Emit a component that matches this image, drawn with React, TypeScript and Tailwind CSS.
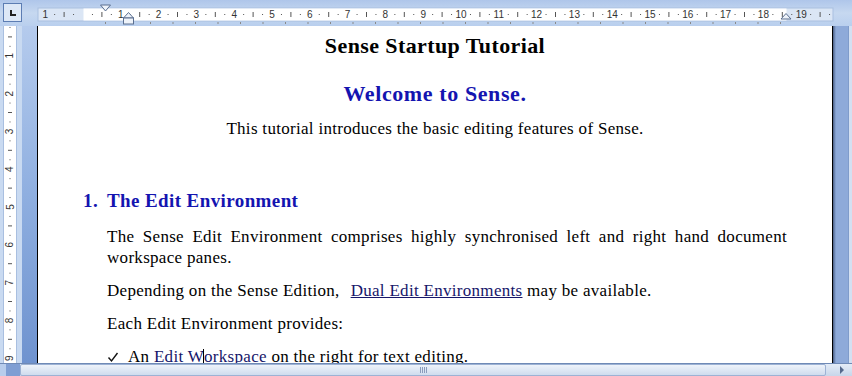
import React from "react";

const CM = 37.8;

function TopRuler() {
  // svg starts at page x = 26
  const zero = 57;
  const marks: React.ReactNode[] = [];
  for (let q = -5; q <= 80; q++) {
    const x = zero + (q * CM) / 4;
    if (x < 14 || x > 804 || q === 0) continue;
    if (q % 4 === 0) {
      marks.push(
        <text key={q} x={x} y={18} textAnchor="middle" fontSize="10" fill="#333" fontFamily="Liberation Sans, sans-serif">
          {Math.abs(q / 4)}
        </text>
      );
    } else if (q % 2 === 0) {
      marks.push(<rect key={q} x={x - 0.5} y={12} width={1} height={5} fill="#555" />);
    } else {
      marks.push(<rect key={q} x={x - 0.5} y={14} width={1} height={1} fill="#555" />);
    }
  }
  const tabs: React.ReactNode[] = [];
  for (let k = 1; k <= 31; k++) {
    const x = zero + k * 22.5;
    tabs.push(<rect key={k} x={x - 0.5} y={22} width={1} height={2} fill="#8a8a8a" />);
  }
  return (
    <svg width="826" height="26" className="block">
      <rect x="12" y="8" width="795" height="13" fill="#dbe6f5" stroke="#a9bfe0" />
      <rect x="57.5" y="8.5" width="703" height="12" fill="#ffffff" />
      {marks}
      {tabs}
      {/* first line indent */}
      <polygon points="74.5,5 84.5,5 79.5,11" fill="#eef3fa" stroke="#5b6f90" />
      {/* hanging indent + left indent box */}
      <polygon points="97.5,18 107.5,18 102.5,12.5" fill="#eef3fa" stroke="#5b6f90" />
      <rect x="97.5" y="18" width="10" height="6" fill="#eef3fa" stroke="#5b6f90" />
      {/* right indent */}
      <polygon points="755,19 765,19 760,13.5" fill="#eef3fa" stroke="#5b6f90" />
    </svg>
  );
}

function SideRuler() {
  const zero = -8;
  const marks: React.ReactNode[] = [];
  for (let q = 1; q <= 38; q++) {
    const y = zero + (q * CM) / 4;
    if (y > 337) continue;
    if (q % 4 === 0) {
      marks.push(
        <text
          key={q}
          x={10}
          y={y + 3.5}
          textAnchor="middle"
          fontSize="10"
          fill="#333"
          fontFamily="Liberation Sans, sans-serif"
          transform={`rotate(-90 10 ${y})`}
        >
          {q / 4}
        </text>
      );
    } else if (q % 2 === 0) {
      marks.push(<rect key={q} x={8} y={y - 0.5} width={4} height={1} fill="#555" />);
    } else {
      marks.push(<rect key={q} x={9.5} y={y - 0.5} width={1} height={1} fill="#555" />);
    }
  }
  return (
    <svg width="22" height="337" className="block">
      <rect x="3.5" y="-2" width="13" height="345" fill="#ffffff" stroke="#a9bfe0" />
      {marks}
    </svg>
  );
}

function Check() {
  return (
    <svg width="12" height="12" viewBox="0 0 12 12" className="inline-block">
      <path d="M1.5 6.5 L4.5 10 L10.5 2" fill="none" stroke="#111" strokeWidth="1.4" />
    </svg>
  );
}

export default function App() {
  return (
    <div className="w-[852px] h-[376px] overflow-hidden flex flex-col bg-[#a9c2e6]">
      <div className="h-[26px] flex bg-gradient-to-b from-[#afc6ea] via-[#c6d8f0] to-[#b9cfee]">
        <div className="w-[26px] pt-[3px] pl-[3px]">
          <div className="w-[19px] h-[19px] border border-[#5c7db3] bg-[#dde8f7] flex items-center justify-center">
            <div className="w-[6px] h-[6px] border-l-2 border-b-2 border-[#222] ml-[1px]" />
          </div>
        </div>
        <TopRuler />
      </div>

      <div className="flex h-[337px]">
        <div className="w-[22px] bg-[#c9daf1]">
          <SideRuler />
        </div>
        <div className="w-[15px] bg-gradient-to-b from-[#b5cbed] via-[#8fafe0] to-[#6f93cf]" />
        <div className="w-[796px] bg-white border-l border-r border-black font-['Liberation_Serif',serif] text-black">
          <div className="px-[45px] pt-[6px]">
            <div className="text-center font-bold text-[22px] leading-[28px] tracking-[0.4px]">Sense Startup Tutorial</div>
            <div className="mt-[20px] text-center font-bold text-[22px] leading-[28px] tracking-[0.6px] text-[#1414b0]">
              Welcome to Sense.
            </div>
            <div className="mt-[10px] text-center text-[17px] leading-[21px] tracking-[0.3px]">
              This tutorial introduces the basic editing features of Sense.
            </div>
            <div className="mt-[49px] flex font-bold text-[19px] leading-[26px] tracking-[0.4px] text-[#1414b0]">
              <span className="w-[24px]">1.</span>
              <span>The Edit Environment</span>
            </div>
            <div className="ml-[24px] text-[17px] leading-[21px] tracking-[0.3px]">
              <div className="mt-[12px]">
                <p className="text-justify [text-align-last:justify]">
                  The Sense Edit Environment comprises highly synchronised left and right hand document
                </p>
                <p>workspace panes.</p>
              </div>
              <p className="mt-[12px]">
                Depending on the Sense Edition,
                <span className="ml-[11px] underline text-[#16166a]">Dual Edit Environments</span> may be available.
              </p>
              <p className="mt-[12px]">Each Edit Environment provides:</p>
              <div className="mt-[12px] flex items-center">
                <span className="w-[21px] flex items-center">
                  <Check />
                </span>
                <span>
                  An <span className="text-[#16166a]">Edit W</span>
                  <span className="inline-block w-0 h-[17px] border-l border-black align-[-4px] -ml-[1px]" />
                  <span className="text-[#16166a]">orkspace</span> on the right for text editing.
                </span>
              </div>
            </div>
          </div>
        </div>
        <div className="w-[19px] flex bg-[#8eaad9]">
          <div className="w-[3px] bg-gradient-to-r from-[#4a5f85] to-[#8eaad9]" />
          <div className="flex-1" />
          <div className="w-[4px] bg-[#d3e0f2] border-l border-[#7f9ccb]" />
        </div>
      </div>

      <div className="h-[13px] flex border-t border-[#6f8ab6] bg-gradient-to-b from-[#e4ecf7] to-[#c7d6ea]">
        <div className="w-[20px] flex">
          <div className="w-[6px] bg-[#b8cdec]" />
          <div className="flex-1 bg-[#7f9ed3]" />
        </div>
        <div className="w-[806px] flex items-center justify-center border border-[#9db2d4] rounded-[2px] bg-gradient-to-b from-[#eef3fa] to-[#cfdcee]">
          <div className="flex gap-[1px]">
            <div className="w-[1px] h-[6px] bg-[#8a9cbc]" />
            <div className="w-[1px] h-[6px] bg-[#8a9cbc]" />
            <div className="w-[1px] h-[6px] bg-[#8a9cbc]" />
            <div className="w-[1px] h-[6px] bg-[#8a9cbc]" />
          </div>
        </div>
        <div className="w-[10px]" />
        <div className="flex-1 flex items-center pl-[4px]">
          <div className="w-0 h-0 border-y-[4px] border-y-transparent border-l-[4px] border-l-[#55698c]" />
        </div>
      </div>
    </div>
  );
}
